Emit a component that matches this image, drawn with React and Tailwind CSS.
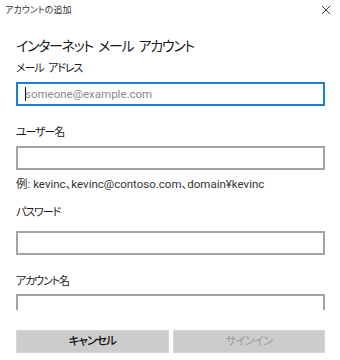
import React from "react";

const jp = "font-['Roboto','Noto_Sans_CJK_JP',sans-serif] [font-feature-settings:'palt']";

function Label({ children, className = "" }) {
  return (
    <div className={`text-[11px] leading-[16px] tracking-[-1.1px] [word-spacing:3px] text-[#1a1a1a] ${className}`}>{children}</div>
  );
}

function Box({ className = "" }) {
  return <div className={`h-[24px] border-2 border-[#a3a3a3] bg-white ${className}`} />;
}

export default function App() {
  return (
    <div className={`w-[340px] h-[360px] bg-white flex flex-col ${jp}`}>
      <div className="h-[20px] flex items-center justify-between pl-[5px] pr-[9px]">
        <span className="text-[9px] leading-[12px] text-[#333] mt-[-1px]">アカウントの追加</span>
        <svg width="10" height="10" viewBox="0 0 10 10" className="mt-[-1px]">
          <path d="M1 1 L9 9 M9 1 L1 9" stroke="#333" strokeWidth="1" fill="none" />
        </svg>
      </div>
      <div className="h-[290px] overflow-hidden px-[16px] pr-[15px]">
        <div className="mt-[15px] text-[14px] leading-[22px] tracking-[-1.3px] [word-spacing:3px] text-[#1a1a1a]">インターネット メール アカウント</div>
        <Label className="mt-[4px]">メール アドレス</Label>
        <div className="mt-[5px] h-[24px] border-2 border-[#1b7fd6] bg-white flex items-center pl-[7px]">
          <span className="inline-block w-px h-[14px] bg-[#111]" />
          <span className="text-[11.5px] leading-[16px] text-[#8a8a8a] ml-[-1px]">someone@example.com</span>
        </div>
        <Label className="mt-[19px]">ユーザー名</Label>
        <Box className="mt-[5px]" />
        <div className="mt-[6px] text-[11.5px] leading-[16px] text-[#333]">例: kevinc、kevinc@contoso.com、domain¥kevinc</div>
        <Label className="mt-[13px]">パスワード</Label>
        <Box className="mt-[10px]" />
        <Label className="mt-[19px]">アカウント名</Label>
        <Box className="mt-[4px]" />
      </div>
      <div className="pt-[20px] px-[16px] pr-[15px] flex gap-[4px]">
        <div className="flex-1 h-[23px] bg-[#cccccc] border border-[#d5d5d5] flex items-center justify-center text-[11.5px] tracking-[-1px] text-[#111] font-medium">キャンセル</div>
        <div className="flex-1 h-[23px] bg-[#cccccc] border border-[#d5d5d5] flex items-center justify-center text-[11.5px] tracking-[-1px] text-[#9a9a9a]">サインイン</div>
      </div>
    </div>
  );
}
